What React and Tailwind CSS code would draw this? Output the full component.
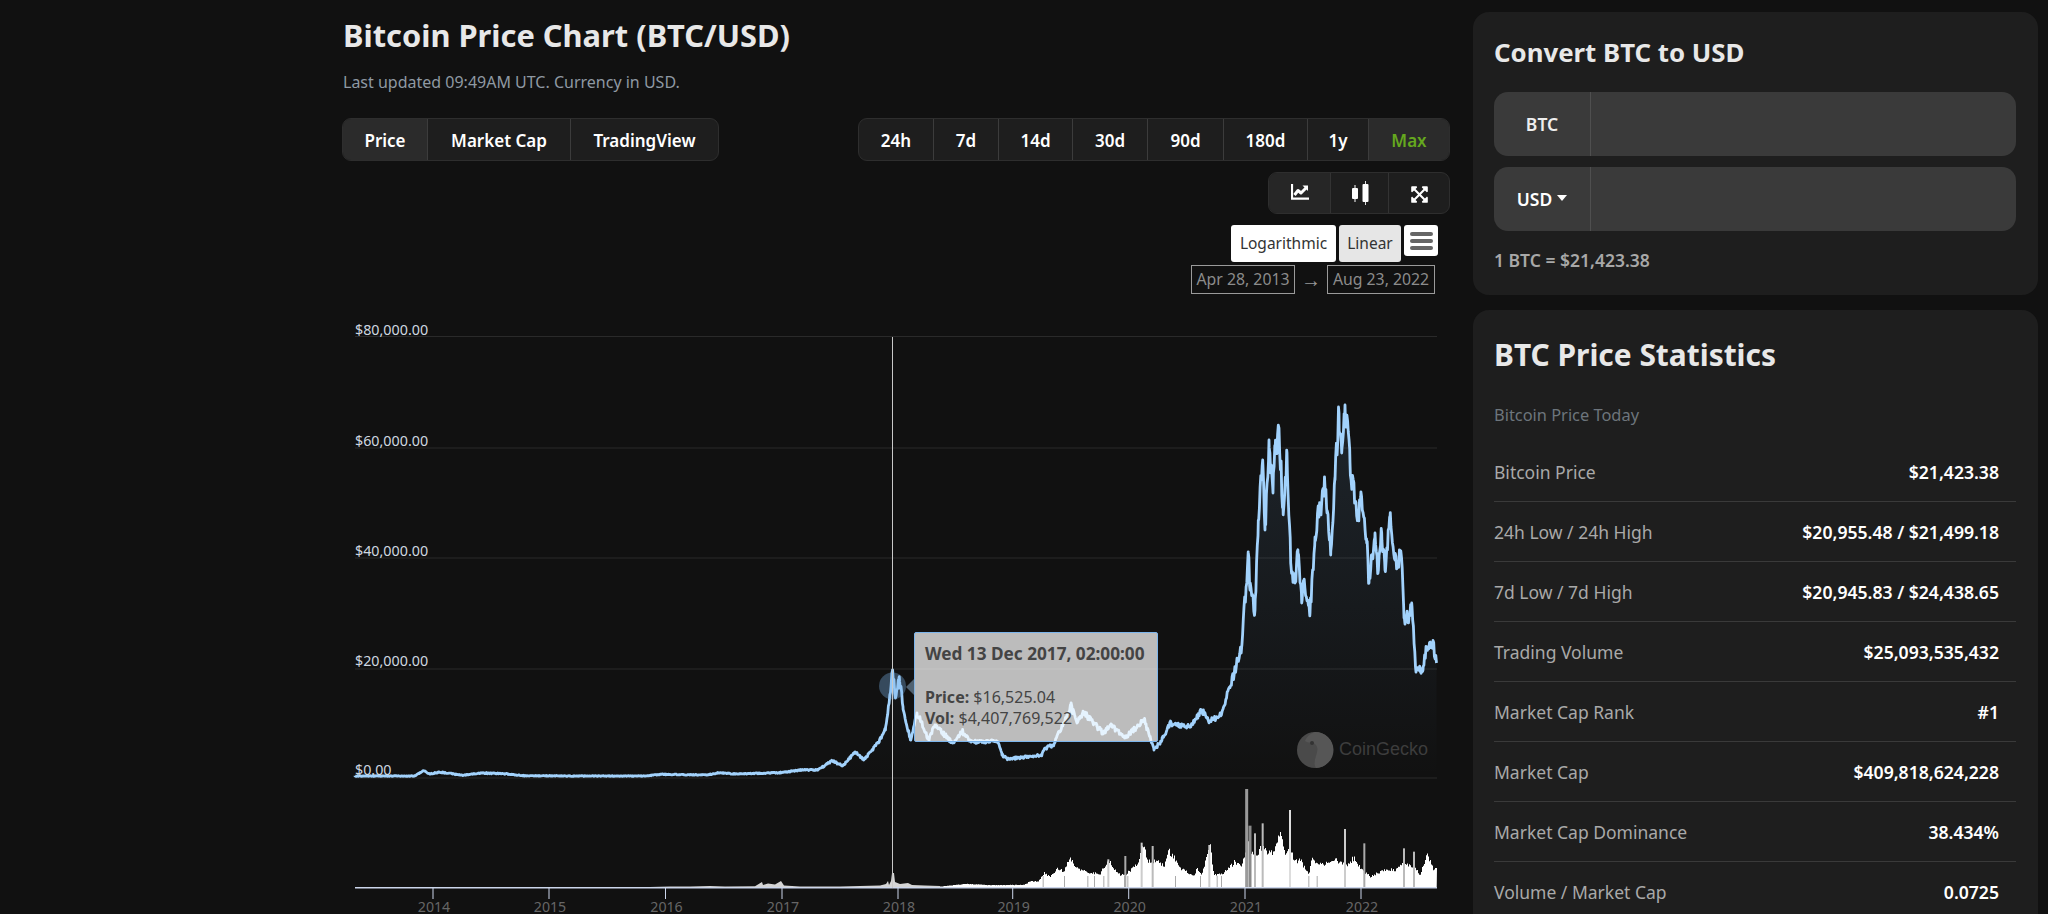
import React from "react";
import { FaExpandArrowsAlt } from "react-icons/fa";

const FONT = "font-['Noto_Sans','Open_Sans',sans-serif]";

const PRICE = [[355,776],[414.6,776],[423.4,770.7],[430,774],[439.5,772],[462.5,775.3],[481.6,773],[504.6,773.7],[523.7,775.7],[569.6,776],[646,776],[661.5,774.3],[707.4,775],[718.9,772.7],[734,774],[780,772.7],[801,770],[818,770],[831.8,760.7],[843,765.7],[855,752],[863.7,760],[872,750],[879.5,740],[885.5,730],[889.4,700],[892.6,670],[895.3,696.7],[899.3,676.7],[903,706.7],[910.4,740],[917,713],[929,740],[934.9,725],[952.6,743],[962.5,731.7],[970.4,741.7],[998,741.7],[1002,755],[1008,759],[1041.6,755],[1045.5,748],[1053.4,745],[1059.4,731.7],[1071,706],[1077,723],[1083,711.7],[1097,726.7],[1103,733],[1110.8,725],[1124.6,738],[1144.3,720],[1154,750],[1162,740],[1170,723],[1189.8,726.7],[1201.7,710],[1209.6,721.7],[1221.4,715],[1235,670],[1241.7,646.7],[1248.3,553],[1250,590],[1255,610],[1258.3,520],[1262.7,460],[1265,530],[1269,440],[1273,493],[1275,453],[1279,428],[1283,507],[1287,453],[1290.7,563],[1295,583],[1298,553],[1301.7,603],[1304,580],[1310,613],[1315,537],[1320,507],[1325,487],[1327,513],[1330.7,555],[1335,477],[1339,413],[1341.7,453],[1345,405],[1350,463],[1358,520],[1360.7,497],[1366.7,543],[1369,583],[1375,533],[1378,573],[1381.7,533],[1385,570],[1390,517],[1395,560],[1401.7,560],[1404,618],[1409,617],[1411.7,603],[1416,672],[1423,670],[1426.7,647],[1433,643],[1436.5,663]];

const VOL_ENV = [[0,380],[80,372],[150,376],[250,375],[270,365],[295,365],[310,340],[330,350],[350,325],[370,335],[390,290],[400,315],[440,340],[480,340],[505,300],[520,330],[540,345],[560,340],[590,315],[608,250],[620,300],[650,305],[670,320],[685,275],[700,290],[720,325],[760,350],[770,325],[785,345],[810,255],[820,345],[850,340],[885,305],[905,320],[920,245],[940,290],[965,265],[1000,285],[1022,215],[1035,290],[1048,240],[1060,310],[1080,300],[1105,345],[1115,295],[1130,315],[1155,310],[1190,300],[1215,320],[1240,295],[1265,330],[1290,350],[1330,330],[1370,330],[1390,310],[1420,320],[1440,345],[1460,280],[1480,330],[1490,325]];
const VOL_SPIKES = [[920,87,"#9a9a9a",3],[930,197,"#8a8a8a",3],[968,190,"#bbbbbb",2],[945,220,"#bbbbbb",2],[1050,150,"#dddddd",2],[1215,207,"#cccccc",2],[1273,250,"#aaaaaa",2],[1392,265,"#bbbbbb",2],[1422,275,"#bbbbbb",2],[808,255,"#cccccc",2],[605,248,"#cccccc",2],[556,288,"#aaaaaa",2],[638,258,"#bbbbbb",2],[505,298,"#cccccc",2]];
const VOL_GAPS = [308,372,442,462,490,552,562,705,780,830,843,1105,1130];

function rng(seed) {
  let s = seed;
  return () => {
    s = (s * 1664525 + 1013904223) % 4294967296;
    return s / 4294967296;
  };
}
function interp(pts, x) {
  for (let i = 1; i < pts.length; i++) {
    if (x <= pts[i][0]) {
      const [a, b] = pts[i - 1];
      const [c, d] = pts[i];
      return b + ((x - a) / (c - a)) * (d - b);
    }
  }
  return pts[pts.length - 1][1];
}
function buildPrice() {
  const r = rng(7);
  const out = [];
  for (let x = 355; x < 1436.5; x += 0.7) {
    const y = interp(PRICE, x);
    const amp = (778 - y) * 0.045 + 0.3;
    out.push([x, Math.min(776.5, y + (r() - 0.5) * amp * 2)]);
  }
  PRICE.forEach((p) => out.push(p));
  out.sort((a, b) => a[0] - b[0]);
  return out;
}
const pricePts = buildPrice();
const linePath = "M" + pricePts.map((p) => `${p[0].toFixed(1)} ${p[1].toFixed(1)}`).join("L");
const areaPath = linePath + "L1436.5 778L355 778Z";

function buildVol() {
  const r = rng(21);
  let d = "M940 888";
  for (let px = 0; px <= 1490; px += 3) {
    const py = interp(VOL_ENV, px);
    const h = (383 - py) / 3;
    const y = 887.5 - h * (0.9 + r() * 0.2);
    const x = 940 + px / 3;
    d += `L${x.toFixed(1)} ${y.toFixed(1)}L${(x + 1).toFixed(1)} ${y.toFixed(1)}`;
  }
  return d + "L1436.7 888Z";
}
const volPath = buildVol();

const EARLY_VOL = [[650,887],[670,886.5],[690,886.5],[710,886],[725,886.5],[755,886.2],[762,882],[763,885],[768,883.5],[775,884.5],[781,881],[784,885.5],[800,886.5],[840,886.5],[880,885.5],[886,884],[888,881],[889,885],[891,881],[892,873],[894,873],[895,882],[900,884],[908,883],[912,885],[925,885.5],[940,886]];

const Card = ({ className = "", children }) => (
  <div className={`bg-[#1e1e1e] rounded-[16px] ${className}`}>{children}</div>
);

const Seg = ({ w, active, green, last, children }) => (
  <div
    className={`h-full flex items-center justify-center pt-[2px] text-[17px] font-semibold ${w} ${active ? "bg-[#2b2b2b]" : ""} ${green ? "text-[#65a81e]" : "text-white"} ${last ? "" : "border-r border-[#3c3c3c]"}`}
  >
    {children}
  </div>
);

const SegGroup = ({ className = "", children }) => (
  <div className={`flex h-[43px] bg-[#1e1e1e] border border-[#2e2e2e] rounded-[9px] overflow-hidden ${className}`}>{children}</div>
);

const ChartIcon = () => (
  <svg width="18" height="16" viewBox="0 0 18 16" fill="none">
    <path d="M1 0V14.7H18" stroke="white" strokeWidth="2.2" />
    <path d="M3.5 11L7 6.5L10 9L15.5 3.5" stroke="white" strokeWidth="3" strokeLinejoin="round" />
    <path d="M11.5 1.5H17V7Z" fill="white" />
  </svg>
);

const CandleIcon = () => (
  <svg width="18" height="24" viewBox="0 0 18 24">
    <rect x="3.5" y="4" width="1" height="17" fill="white" />
    <rect x="1" y="7" width="6" height="11" rx="1" fill="white" />
    <rect x="14" y="0" width="1" height="24" fill="#dddddd" />
    <rect x="11.5" y="3" width="6" height="18" rx="1" fill="white" />
  </svg>
);

const STATS = [
  ["Bitcoin Price", "$21,423.38"],
  ["24h Low / 24h High", "$20,955.48 / $21,499.18"],
  ["7d Low / 7d High", "$20,945.83 / $24,438.65"],
  ["Trading Volume", "$25,093,535,432"],
  ["Market Cap Rank", "#1"],
  ["Market Cap", "$409,818,624,228"],
  ["Market Cap Dominance", "38.434%"],
  ["Volume / Market Cap", "0.0725"],
];

const InputRow = ({ children }) => (
  <div className="flex h-[64px] bg-[#3a3a3a] rounded-[14px]">
    <div className="w-[97px] flex items-center justify-center pt-[1px] border-r border-[#4f4f4f] text-[17.5px] font-semibold text-[#eeeeee]">
      {children}
    </div>
  </div>
);

export default function App() {
  return (
    <div className={`${FONT} h-[914px] overflow-hidden bg-[#111111] flex pl-[342px]`}>
      <div className="w-[1108px] shrink-0 flex flex-col">
        <h1 className="mt-[15px] h-[40px] leading-[40px] text-[30.8px] font-bold text-[#e8e8e8] pl-[1px]">
          Bitcoin Price Chart (BTC/USD)
        </h1>
        <p className="mt-[15px] h-[24px] leading-[24px] text-[16px] text-[#8f99a3] pl-[1px]">
          Last updated 09:49AM UTC. Currency in USD.
        </p>
        <div className="mt-[24px] flex justify-between">
          <SegGroup>
            <Seg w="w-[85px]" active>Price</Seg>
            <Seg w="w-[143px]">Market Cap</Seg>
            <Seg w="w-[147px]" last>TradingView</Seg>
          </SegGroup>
          <SegGroup>
            <Seg w="w-[75px]">24h</Seg>
            <Seg w="w-[65px]">7d</Seg>
            <Seg w="w-[74px]">14d</Seg>
            <Seg w="w-[75px]">30d</Seg>
            <Seg w="w-[76px]">90d</Seg>
            <Seg w="w-[84px]">180d</Seg>
            <Seg w="w-[61px]">1y</Seg>
            <Seg w="w-[80px]" active green last>Max</Seg>
          </SegGroup>
        </div>
        <div className="mt-[11px] flex justify-end">
          <div className="flex h-[42px] bg-[#1e1e1e] border border-[#2e2e2e] rounded-[9px] overflow-hidden">
            <div className="w-[62px] flex items-center justify-center border-r border-[#333333] bg-[#262626] pb-[2px]"><ChartIcon /></div>
            <div className="w-[58px] flex items-center justify-center border-r border-[#333333]"><CandleIcon /></div>
            <div className="w-[60px] flex items-center justify-center text-white pt-[2px]"><FaExpandArrowsAlt size={19} /></div>
          </div>
        </div>
        <div className="mt-[11px] flex justify-end items-start gap-[3px] pr-[12px] h-[37px]">
          <div className="w-[105px] h-[37px] bg-white rounded-[3px] flex items-center justify-center text-[15.5px] text-[#333333]">Logarithmic</div>
          <div className="w-[62px] h-[37px] bg-[#e6e6e6] rounded-[3px] flex items-center justify-center text-[15.5px] text-[#333333]">Linear</div>
          <div className="w-[34px] h-[31px] bg-white rounded-[3px] flex flex-col items-center justify-center gap-[3px]">
            <div className="w-[23px] h-[4px] rounded-full bg-[#666666]" />
            <div className="w-[23px] h-[4px] rounded-full bg-[#666666]" />
            <div className="w-[23px] h-[4px] rounded-full bg-[#666666]" />
          </div>
        </div>
        <div className="mt-[3px] flex justify-end items-center pr-[15px] h-[29px] text-[15.8px] text-[#8c8c8c]">
          <div className="w-[104px] h-[29px] border border-[#9a9a9a] flex items-center justify-center whitespace-nowrap">Apr 28, 2013</div>
          <div className="w-[32px] text-center text-[20px] leading-[20px] text-[#999999]">→</div>
          <div className="w-[108px] h-[29px] border border-[#9a9a9a] flex items-center justify-center whitespace-nowrap">Aug 23, 2022</div>
        </div>
        <div className="relative flex-1 min-h-0">
          <svg width="1108" height="620" viewBox="342 294 1108 620" className="block">
            <defs>
              <linearGradient id="area" gradientUnits="userSpaceOnUse" x1="0" y1="405" x2="0" y2="778">
                <stop offset="0" stopColor="#7cb5ec" stopOpacity="0.12" />
                <stop offset="1" stopColor="#7cb5ec" stopOpacity="0" />
              </linearGradient>
            </defs>
            {[336.5, 448, 558, 669, 778].map((y) => (
              <rect key={y} x="355" y={y - 0.5} width="1082" height="1" fill="#2a2a2a" />
            ))}
            <path d={areaPath} fill="url(#area)" />
            <path d={linePath} fill="none" stroke="#a2d2fc" strokeWidth="2.8" strokeLinejoin="round" />
            {[["$80,000.00", 330], ["$60,000.00", 441], ["$40,000.00", 551], ["$20,000.00", 661], ["$0.00", 770]].map(([t, y]) => (
              <text key={t} x="355" y={y + 5} fontSize="14.3" fill="#cfd8e0">{t}</text>
            ))}
            <path d={volPath} fill="#ffffff" />
            <path d={"M650 888" + EARLY_VOL.map((p) => `L${p[0]} ${p[1]}`).join("") + "L940 888Z"} fill="#d5d5d5" />
            {VOL_SPIKES.map(([px, py, c, w]) => (
              <rect key={px} x={940 + px / 3 - w / 2} y={760 + py / 3} width={w} height={887.5 - (760 + py / 3)} fill={c} />
            ))}
            {VOL_GAPS.map((px) => (
              <rect key={px} x={940 + px / 3} y="876" width="1" height="11" fill="#aaaaaa" />
            ))}
            <rect x="355" y="887" width="1082" height="1.5" fill="#ccd6eb" />
            {[[433, 2014], [549, 2015], [665.5, 2016], [782, 2017], [898, 2018], [1012.7, 2019], [1128.7, 2020], [1245, 2021], [1361, 2022]].map(([x, t]) => (
              <g key={t}>
                <rect x={x - 0.5} y="888" width="1" height="11" fill="#ccd6eb" />
                <text x={x + 1} y="912" fontSize="14.2" fill="#666666" textAnchor="middle">{t}</text>
              </g>
            ))}
            <circle cx="892.5" cy="686" r="13.5" fill="#7cb5ec" fillOpacity="0.35" />
            <rect x="892" y="337" width="1" height="551" fill="#c8c8c8" />
            <circle cx="1315" cy="750" r="18" fill="#4a4a4a" />
            <path d="M1315 732A18 18 0 0 1 1316 768C1311 760 1321 752 1316 745C1313 741 1308 744 1305 741C1307 736 1311 733 1315 732Z" fill="#565656" />
            <circle cx="1312" cy="743" r="2" fill="#333333" />
            <text x="1339" y="755" fontSize="18" fontFamily="'Liberation Sans',sans-serif" fill="#3d3d3d">CoinGecko</text>
          </svg>
          <div className="absolute left-[572px] top-[338px] w-[244px] h-[110px] bg-[rgba(255,255,255,0.72)] border border-[#7cb5ec] rounded-[2px] pl-[10px] text-[16px] text-[#444444]">
            <div className="absolute left-[-9px] top-[45px] w-0 h-0 border-y-[9px] border-y-transparent border-r-[9px] border-r-[#8fb4d4]/50" />
            <div className="mt-[10px] h-[21px] leading-[21px] text-[17.2px] font-bold whitespace-nowrap">Wed 13 Dec 2017, 02:00:00</div>
            <div className="mt-[23px] h-[21px] leading-[21px] whitespace-nowrap"><b>Price:</b> $16,525.04</div>
            <div className="h-[21px] leading-[21px] whitespace-nowrap"><b>Vol:</b> $4,407,769,522</div>
          </div>
        </div>
      </div>
      <div className="ml-[23px] w-[565px] shrink-0 flex flex-col pt-[12px]">
        <Card className="h-[283px] shrink-0 px-[21px] pt-[23px]">
          <h2 className="h-[34px] leading-[34px] text-[25.8px] font-bold text-[#e8e8e8]">Convert BTC to USD</h2>
          <div className="mt-[23px] flex flex-col gap-[11px] w-[522px]">
            <InputRow>BTC</InputRow>
            <InputRow>
              <span className="text-white">USD</span>
              <span className="ml-[5px] mb-[3px] w-0 h-0 border-x-[5px] border-x-transparent border-t-[6px] border-t-white" />
            </InputRow>
          </div>
          <div className="mt-[18px] h-[22px] leading-[22px] text-[17.5px] font-semibold text-[#a8a8a8]">1 BTC = $21,423.38</div>
        </Card>
        <Card className="mt-[15px] flex-1 rounded-b-none px-[21px] pt-[26px]">
          <h2 className="h-[38px] leading-[38px] text-[29.9px] font-bold text-[#e8e8e8]">BTC Price Statistics</h2>
          <div className="mt-[29px] h-[24px] leading-[24px] text-[16.4px] text-[#6d757c]">Bitcoin Price Today</div>
          <div className="mt-[15px] w-[522px]">
            {STATS.map(([k, v], i) => (
              <div key={k} className={`h-[60px] flex items-center justify-between pt-[1px] pr-[17px] ${i < STATS.length - 1 ? "border-b border-[#3a3a3a]" : ""}`}>
                <span className="text-[17.5px] text-[#a9a9a9]">{k}</span>
                <span className="text-[17.6px] font-semibold text-white">{v}</span>
              </div>
            ))}
          </div>
        </Card>
      </div>
    </div>
  );
}
